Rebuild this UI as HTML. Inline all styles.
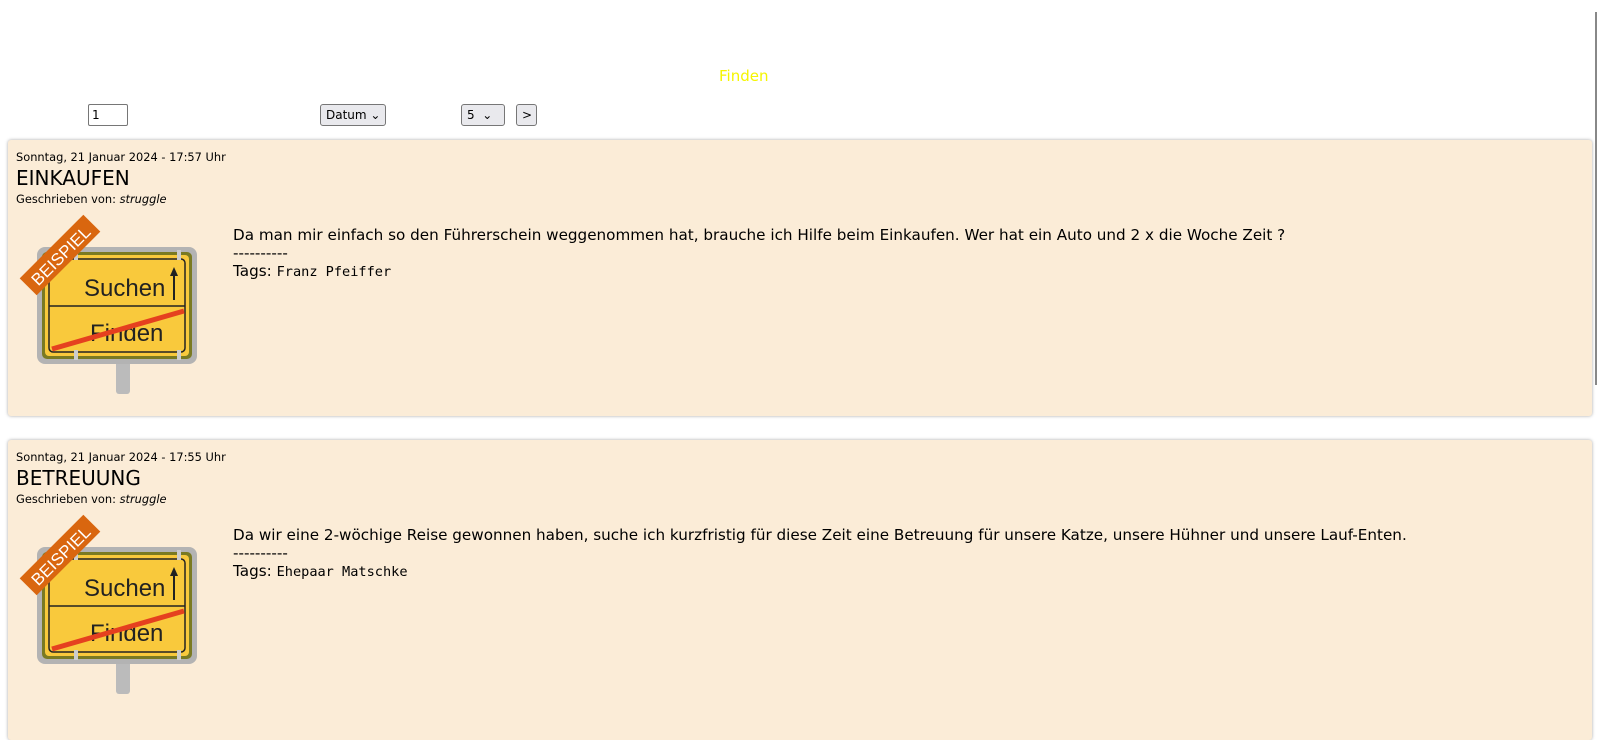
<!DOCTYPE html>
<html><head><meta charset="utf-8"><style>
html,body{margin:0;padding:0;background:#fff;width:1600px;height:704px;overflow:hidden;font-family:"DejaVu Sans","Liberation Sans",sans-serif;}
.abs{position:absolute;white-space:nowrap}
.finden{left:719px;top:67px;color:#f5f500;font-size:15px}
.inp{border:1px solid #767676;border-radius:2px;background:#fff;font-size:12px;box-sizing:border-box;height:22px;top:104px;padding:3px 3px;}
.sel{border:1px solid #767676;border-radius:3px;background:#e9e9ed;font-size:12px;box-sizing:border-box;height:22px;top:104px;padding:3px 5px;}
.card{position:absolute;left:8px;width:1584px;background:#fbecd7;border-radius:3px;box-shadow:0 0 3px rgba(0,0,0,.35);}
.date{position:absolute;left:8px;top:10px;font-size:11.4px;white-space:nowrap}
.title{position:absolute;left:8px;top:26px;font-size:20px}
.by{position:absolute;left:8px;top:52px;font-size:11.4px}
.body{position:absolute;left:225px;top:86px;font-size:15.2px;line-height:18px;white-space:nowrap}
.mono{font-family:"DejaVu Sans Mono","Liberation Mono",monospace;font-size:13.6px}
.sign{position:absolute;left:4px;top:70px}
.sb{position:absolute;left:1595px;top:12px;width:2px;height:373px;background:#888}
</style></head><body>
<div class="abs finden">Finden</div>
<div class="abs inp" style="left:88px;width:40px">1</div>
<div class="abs sel" style="left:320px;width:66px">Datum ⌄</div>
<div class="abs sel" style="left:461px;width:44px">5 &nbsp;⌄</div>
<div class="abs sel" style="left:516px;width:21px;padding:3px 5px">&gt;</div>
<div class="sb"></div>

<div class="card" style="top:140px;height:276px">
<div class="date">Sonntag, 21 Januar 2024 - 17:57 Uhr</div>
<div class="title">EINKAUFEN</div>
<div class="by">Geschrieben von: <i>struggle</i></div>
<div class="sign"><svg width="190" height="190" viewBox="0 0 190 190">
<rect x="104" y="140" width="14" height="44" rx="3" fill="#bbb"/>
<rect x="25" y="37" width="160" height="117" rx="8" fill="#b3b3b3"/>
<rect x="30" y="42" width="150" height="107" rx="5" fill="#7a7a22"/>
<rect x="33" y="45" width="144" height="101" rx="4" fill="#f9c93c"/>
<rect x="37" y="49" width="136" height="93" rx="4" fill="none" stroke="#222" stroke-width="1.5"/>
<line x1="37" y1="96" x2="173" y2="96" stroke="#222" stroke-width="1.5"/>
<text x="72" y="86" font-size="24" font-family="Liberation Sans,sans-serif" fill="#222">Suchen</text>
<line x1="162" y1="90" x2="162" y2="62" stroke="#222" stroke-width="2"/><path d="M158 66 L162 57 L166 66Z" fill="#222"/>
<text x="78" y="131" font-size="24" font-family="Liberation Sans,sans-serif" fill="#222">Finden</text>
<line x1="40" y1="139" x2="172" y2="101" stroke="#e5401f" stroke-width="5"/>
<rect x="62" y="40" width="4" height="10" fill="#ccc"/><rect x="165" y="40" width="4" height="10" fill="#ccc"/>
<rect x="62" y="140" width="4" height="10" fill="#ccc"/><rect x="165" y="140" width="4" height="10" fill="#ccc"/>
<g transform="translate(48,45) rotate(-45)"><rect x="-45" y="-12" width="90" height="24" fill="#d9660f"/><text x="0" y="7" text-anchor="middle" font-size="17" font-family="Liberation Sans,sans-serif" fill="#fff">BEISPIEL</text></g>
</svg></div>
<div class="body">Da man mir einfach so den Führerschein weggenommen hat, brauche ich Hilfe beim Einkaufen. Wer hat ein Auto und 2 x die Woche Zeit ?<br>----------<br>Tags: <span class="mono">Franz Pfeiffer</span></div>
</div>

<div class="card" style="top:440px;height:300px">
<div class="date">Sonntag, 21 Januar 2024 - 17:55 Uhr</div>
<div class="title">BETREUUNG</div>
<div class="by">Geschrieben von: <i>struggle</i></div>
<div class="sign"><svg width="190" height="190" viewBox="0 0 190 190">
<rect x="104" y="140" width="14" height="44" rx="3" fill="#bbb"/>
<rect x="25" y="37" width="160" height="117" rx="8" fill="#b3b3b3"/>
<rect x="30" y="42" width="150" height="107" rx="5" fill="#7a7a22"/>
<rect x="33" y="45" width="144" height="101" rx="4" fill="#f9c93c"/>
<rect x="37" y="49" width="136" height="93" rx="4" fill="none" stroke="#222" stroke-width="1.5"/>
<line x1="37" y1="96" x2="173" y2="96" stroke="#222" stroke-width="1.5"/>
<text x="72" y="86" font-size="24" font-family="Liberation Sans,sans-serif" fill="#222">Suchen</text>
<line x1="162" y1="90" x2="162" y2="62" stroke="#222" stroke-width="2"/><path d="M158 66 L162 57 L166 66Z" fill="#222"/>
<text x="78" y="131" font-size="24" font-family="Liberation Sans,sans-serif" fill="#222">Finden</text>
<line x1="40" y1="139" x2="172" y2="101" stroke="#e5401f" stroke-width="5"/>
<rect x="62" y="40" width="4" height="10" fill="#ccc"/><rect x="165" y="40" width="4" height="10" fill="#ccc"/>
<rect x="62" y="140" width="4" height="10" fill="#ccc"/><rect x="165" y="140" width="4" height="10" fill="#ccc"/>
<g transform="translate(48,45) rotate(-45)"><rect x="-45" y="-12" width="90" height="24" fill="#d9660f"/><text x="0" y="7" text-anchor="middle" font-size="17" font-family="Liberation Sans,sans-serif" fill="#fff">BEISPIEL</text></g>
</svg></div>
<div class="body">Da wir eine 2-wöchige Reise gewonnen haben, suche ich kurzfristig für diese Zeit eine Betreuung für unsere Katze, unsere Hühner und unsere Lauf-Enten.<br>----------<br>Tags: <span class="mono">Ehepaar Matschke</span></div>
</div>
</body></html>
